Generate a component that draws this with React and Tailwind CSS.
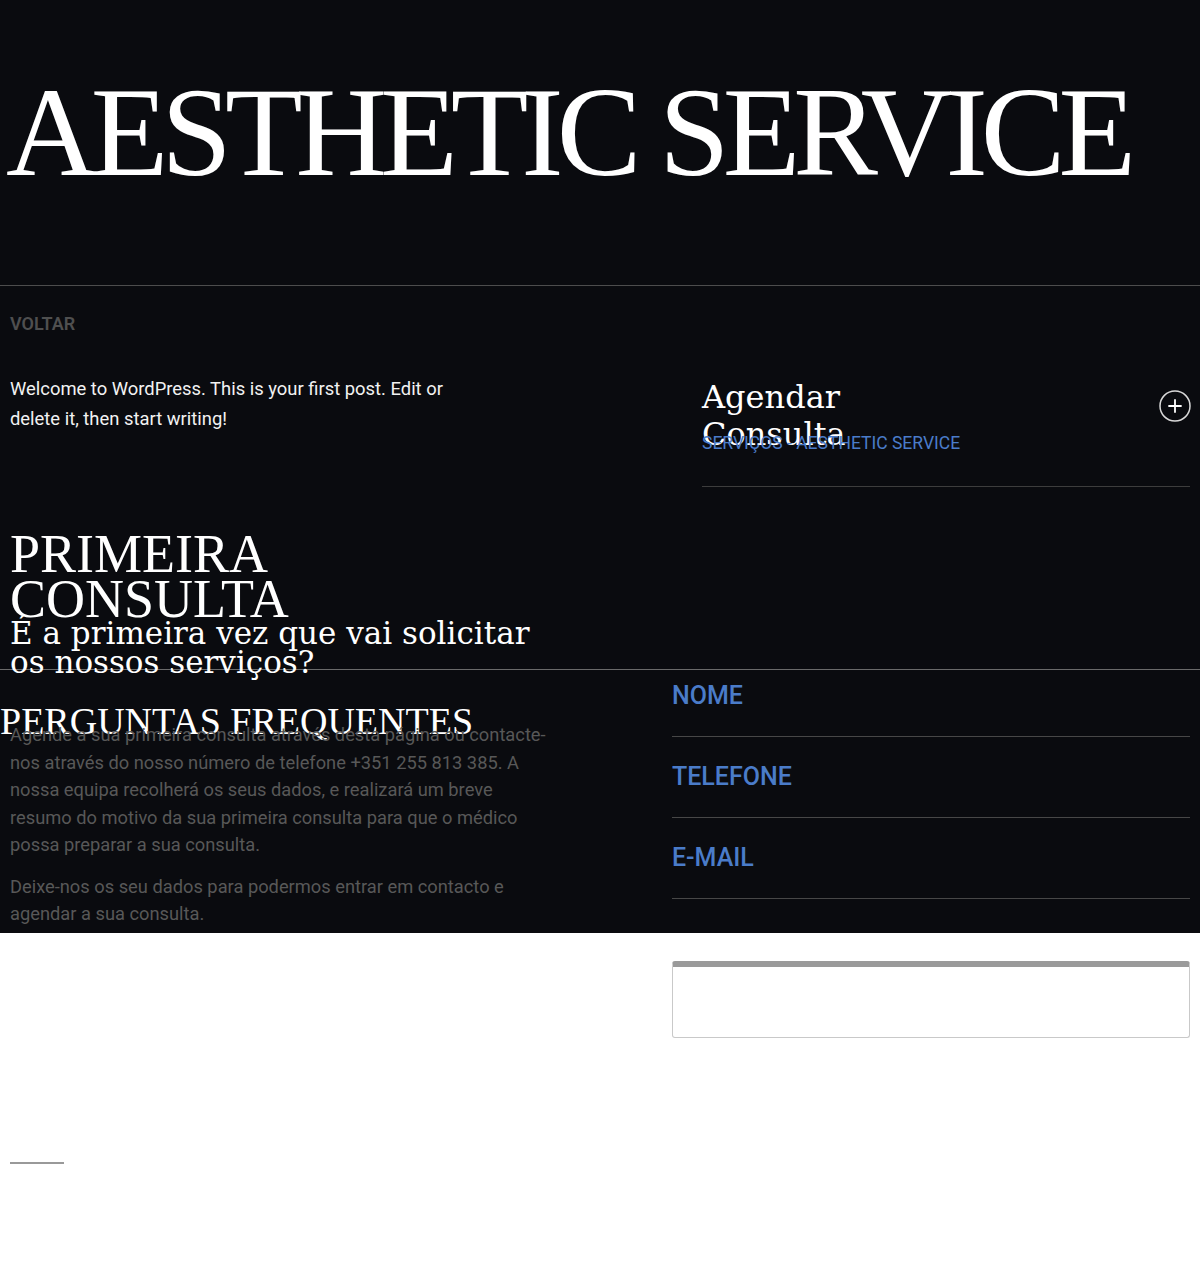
import React from 'react';

const serif = "font-['Liberation_Serif','DejaVu_Serif',serif]";
const wideSerif = "font-['DejaVu_Serif','Liberation_Serif',serif]";
const sans = "font-['Roboto','Liberation_Sans',sans-serif]";

function PlusCircle() {
  return (
    <svg width="32" height="32" viewBox="0 0 32 32" fill="none" className="shrink-0">
      <circle cx="16" cy="16" r="15" stroke="#d9d9d9" strokeWidth="1.5" />
      <path d="M16 10v12M10 16h12" stroke="#ffffff" strokeWidth="1.8" strokeLinecap="round" />
    </svg>
  );
}

function Field({ label, first }) {
  return (
    <div className={(first ? 'pt-[12px]' : 'pt-[26px]') + ' pb-[26px] border-b border-[#474747]'}>
      <p className="text-[25px] leading-[28px] font-medium text-[#4a7cc9] uppercase">{label}</p>
    </div>
  );
}

export default function App() {
  return (
    <div className={`min-h-[1264px] bg-white ${sans}`}>
      <header className="h-[286px] bg-[#0a0b0f] border-b border-[#4d4d4d] pt-[69px] pl-[6px]">
        <h1 className={`${serif} text-[127px] leading-none tracking-[-7px] text-white whitespace-nowrap`}>
          AESTHETIC SERVICE
        </h1>
      </header>

      <main className="bg-[#0a0b0f] px-[10px] pt-[26px] pb-[5px]">
        <a className="block text-[18px] leading-[24px] font-semibold text-[#4f4f4f] uppercase">Voltar</a>

        <div className="flex mt-[38px]">
          <div className="w-[662px]">
            <p className="w-[470px] text-[18.4px] leading-[30px] text-[#f2f2f2]">
              Welcome to WordPress. This is your first post. Edit or delete it, then start writing!
            </p>
          </div>
          <div className="flex-1 pl-[30px]">
            <div className="flex items-start justify-between pt-[5px]">
              <h2 className={`${wideSerif} text-[32px] leading-[37px] text-white w-[200px]`}>Agendar Consulta</h2>
              <div className="mt-[11px] -mr-[1px]">
                <PlusCircle />
              </div>
            </div>
            <p className="-mt-[22px] text-[17.5px] leading-[24px] text-[#4a7cc9] uppercase pb-[31px] border-b border-[#3d3d3d]">
              Serviços - Aesthetic Service
            </p>
          </div>
        </div>

        <div className="mt-[45px]">
          <h2 className={`${serif} text-[54px] leading-[45px] text-white uppercase`}>Primeira<br />Consulta</h2>
          <h3 className={`${wideSerif} -mt-[3px] text-[31px] leading-[29px] text-white`}>
            É a primeira vez que vai solicitar<br />os nossos serviços?
          </h3>
        </div>

        <hr className="-mx-[10px] -mt-[8px] border-0 border-t border-[#6a6a6a]" />

        <div className="flex">
          <div className="w-[662px]">
            <h2 className={`${serif} -ml-[10px] mt-[33px] text-[38px] leading-[37px] text-white uppercase whitespace-nowrap`}>
              Perguntas Frequentes
            </h2>
            <div className="-mt-[19px] w-[540px] text-[18.3px] leading-[27.5px] text-[#585858]">
              <p>
                Agende a sua primeira consulta através desta página ou contacte-nos através do nosso número de telefone +351 255 813 385. A nossa equipa recolherá os seus dados, e realizará um breve resumo do motivo da sua primeira consulta para que o médico possa preparar a sua consulta.
              </p>
              <p className="mt-[14px]">Deixe-nos os seu dados para podermos entrar em contacto e agendar a sua consulta.</p>
            </div>
          </div>
          <div className="flex-1">
            <Field label="Nome" first />
            <Field label="Telefone" />
            <Field label="E-mail" />
          </div>
        </div>
      </main>

      <section className="px-[10px] pt-[28px]">
        <div className="flex">
          <div className="w-[662px]" />
          <div className="flex-1 h-[77px] rounded-[3px] border border-[#c9c9c9] border-t-[6px] border-t-[#9a9a9a] bg-white" />
        </div>
        <div className="mt-[124px] w-[54px] h-[2px] bg-[#999999]" />
      </section>
    </div>
  );
}
